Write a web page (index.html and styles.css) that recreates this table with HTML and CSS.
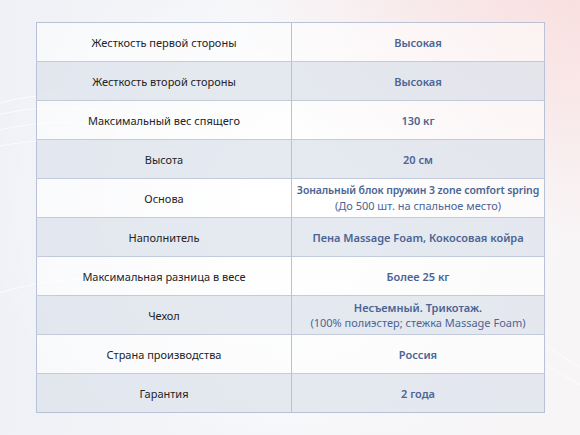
FILE: index.html
```
<!DOCTYPE html>
<html lang="ru">
<head>
<meta charset="utf-8">
<link rel="stylesheet" href="styles.css">
</head>
<body>
<svg class="swirl" width="580" height="435" viewBox="0 0 580 435" aria-hidden="true">
  <g fill="none" stroke="#ffffff" stroke-width="1" opacity="0.8">
    <path d="M-20 110 C 80 70, 200 110, 320 230"/>
    <path d="M-20 120 C 90 85, 200 125, 300 240"/>
    <path d="M-20 135 C 100 100, 210 140, 290 250"/>
    <path d="M-20 150 C 110 120, 220 160, 280 265"/>
    <path d="M-20 300 C 80 260, 200 280, 300 330"/>
    <path d="M600 380 C 520 330, 470 300, 420 200"/>
    <path d="M600 395 C 515 350, 460 320, 410 210"/>
  </g>
</svg>
<div class="page">
  <table class="specs">
    <tr><td class="k">Жесткость первой стороны</td><td class="v">Высокая</td></tr>
    <tr class="alt"><td class="k">Жесткость второй стороны</td><td class="v">Высокая</td></tr>
    <tr><td class="k">Максимальный вес спящего</td><td class="v">130 кг</td></tr>
    <tr class="alt"><td class="k">Высота</td><td class="v">20 см</td></tr>
    <tr><td class="k">Основа</td><td class="v"><span class="small">Зональный блок пружин 3 zone comfort spring</span><span class="note">(До 500 шт. на спальное место)</span></td></tr>
    <tr class="alt"><td class="k">Наполнитель</td><td class="v">Пена Massage Foam, Кокосовая койра</td></tr>
    <tr><td class="k">Максимальная разница в весе</td><td class="v">Более 25 кг</td></tr>
    <tr class="alt"><td class="k">Чехол</td><td class="v">Несъемный. Трикотаж.<span class="note">(100% полиэстер; стежка Massage Foam)</span></td></tr>
    <tr><td class="k">Страна производства</td><td class="v">Россия</td></tr>
    <tr class="alt"><td class="k">Гарантия</td><td class="v">2 года</td></tr>
  </table>
</div>
</body>
</html>
```
FILE: styles.css
```
html, body {
  margin: 0;
  padding: 0;
}
body {
  position: relative;
  width: 580px;
  height: 435px;
  overflow: hidden;
  font-family: "Noto Sans", "Open Sans", sans-serif;
  background:
    radial-gradient(ellipse 360px 260px at 600px -20px, rgba(250,220,220,0.95), rgba(250,228,228,0) 100%),
    radial-gradient(ellipse 300px 260px at 280px 210px, #ffffff, rgba(255,255,255,0) 100%),
    linear-gradient(90deg, #eff1f6 0%, #f5f6f9 50%, #f8f5f6 100%);
}
.swirl {
  position: absolute;
  left: 0;
  top: 0;
}
.page {
  position: relative;
  padding: 22px 35px 0 36px;
}
.specs {
  width: 509px;
  border-collapse: collapse;
  table-layout: fixed;
  border: 1px solid #b7c2d6;
}
.specs td {
  height: 38px;
  padding: 0 4px;
  text-align: center;
  vertical-align: middle;
  border-top: 1px solid #c3cbdb;
  line-height: 15px;
}
.specs tr:first-child td {
  border-top: none;
}
.specs tr {
  background: rgba(255,255,255,0.55);
}
.specs tr.alt {
  background: rgba(222,227,236,0.8);
}
.k {
  width: 246px;
  border-right: 1px solid #b7c2d6;
  font-size: 11px;
  color: #222428;
}
.v {
  font-size: 11px;
  font-weight: 600;
  color: #4a6494;
}
.small {
  display: block;
  font-size: 10.5px;
  letter-spacing: -0.1px;
}
.note {
  display: block;
  font-weight: 400;
  color: #4d6594;
}
```
